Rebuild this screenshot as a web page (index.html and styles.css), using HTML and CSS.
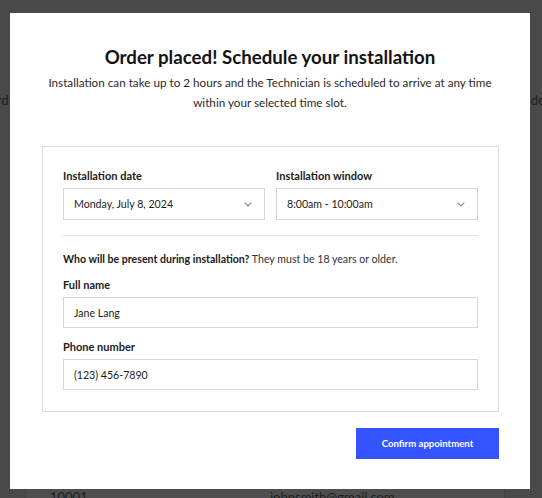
FILE: index.html
```html
<!DOCTYPE html>
<html>
<head>
<meta charset="utf-8">
<link rel="stylesheet" href="styles.css">
</head>
<body>
<div class="page">
  <div class="side-row">
    <span class="side-text">rd</span>
    <span class="side-text">de</span>
  </div>
  <div class="container">
    <div class="table-row">
      <span class="cell-zip">10001</span>
      <span class="cell-email">johnsmith@gmail.com</span>
    </div>
  </div>
</div>

<div class="modal">
  <h1 class="title">Order placed! Schedule your installation</h1>
  <p class="subtitle">Installation can take up to 2 hours and the Technician is scheduled to arrive at any time<br>within your selected time slot.</p>

  <div class="card">
    <div class="two-col">
      <div class="field">
        <div class="label">Installation date</div>
        <div class="select">
          <span>Monday, July 8, 2024</span>
          <svg class="chev" width="8" height="5" viewBox="0 0 8 5"><path d="M0.7 0.7 L4 4 L7.3 0.7" fill="none" stroke="#8a8a8a" stroke-width="1.1"/></svg>
        </div>
      </div>
      <div class="field">
        <div class="label">Installation window</div>
        <div class="select">
          <span>8:00am - 10:00am</span>
          <svg class="chev" width="8" height="5" viewBox="0 0 8 5"><path d="M0.7 0.7 L4 4 L7.3 0.7" fill="none" stroke="#8a8a8a" stroke-width="1.1"/></svg>
        </div>
      </div>
    </div>
    <div class="divider"></div>
    <p class="who"><strong>Who will be present during installation?</strong> They must be 18 years or older.</p>
    <div class="label label-gap">Full name</div>
    <div class="input">Jane Lang</div>
    <div class="label label-gap2">Phone number</div>
    <div class="input">(123) 456-7890</div>
  </div>

  <div class="actions">
    <button class="btn">Confirm appointment</button>
  </div>
</div>
</body>
</html>
```

FILE: styles.css
```css
* { box-sizing: border-box; }
html, body { margin: 0; padding: 0; }
body {
  width: 542px;
  height: 498px;
  overflow: hidden;
  background: #494949;
  font-family: "Lato", "Liberation Sans", sans-serif;
  color: #1c1c1c;
}
.page {
  height: 498px;
  display: flex;
  flex-direction: column;
}
.side-row {
  display: flex;
  justify-content: space-between;
  padding-top: 92px;
  margin: 0 -3px;
  font-size: 13px;
  color: #1e1e1e;
}
.side-text { line-height: 16px; }
.container {
  flex: 1;
  margin: 0 37px 0 25px;
  background: #4e4e4e;
  border-left: 1px solid #424242;
  border-right: 1px solid #424242;
  display: flex;
  flex-direction: column;
  justify-content: flex-end;
}
.table-row {
  display: flex;
  font-size: 13px;
  color: #1e1e1e;
  line-height: 14px;
  margin-bottom: -6px;
}
.cell-zip { margin-left: 24px; width: 220px; }
.modal {
  position: fixed;
  left: 10px;
  top: 13px;
  width: 520px;
  height: 476px;
  background: #fff;
  padding-top: 31px;
}
.title {
  margin: 0;
  text-align: center;
  font-size: 18.7px;
  line-height: 26px;
  font-weight: 700;
  color: #141414;
}
.subtitle {
  margin: 3px 0 0;
  text-align: center;
  font-size: 11.7px;
  line-height: 19.5px;
  color: #2a2a2a;
}
.card {
  margin: 34px 31px 0 32px;
  border: 1px solid #dcdcdc;
  padding: 21px 20px 21px;
}
.two-col {
  display: grid;
  grid-template-columns: 1fr 1fr;
  column-gap: 11px;
}
.label {
  font-size: 11px;
  line-height: 16px;
  font-weight: 700;
  color: #1c1c1c;
}
.select {
  margin-top: 4px;
  height: 32px;
  border: 1px solid #d6d6d6;
  display: flex;
  align-items: center;
  justify-content: space-between;
  padding: 0 12px 0 10px;
  font-size: 10.6px;
  color: #1c1c1c;
}
.chev { display: block; }
.divider {
  margin-top: 15px;
  height: 1px;
  background: #e2e2e2;
}
.who {
  margin: 15px 0 0;
  font-size: 10.6px;
  line-height: 16px;
  color: #333;
}
.who strong { color: #1a1a1a; font-weight: 700; }
.label-gap { margin-top: 10px; }
.label-gap2 { margin-top: 11px; }
.input {
  margin-top: 4px;
  height: 31px;
  border: 1px solid #d6d6d6;
  display: flex;
  align-items: center;
  padding: 0 10px;
  font-size: 10.6px;
  color: #1c1c1c;
}
.actions {
  display: flex;
  justify-content: flex-end;
  margin: 16px 31px 0 0;
}
.btn {
  width: 143px;
  height: 31px;
  border: none;
  background: #3354ff;
  color: #fff;
  font-family: "Lato", "Liberation Sans", sans-serif;
  font-size: 9.6px;
  font-weight: 700;
  padding: 0;
}
```
